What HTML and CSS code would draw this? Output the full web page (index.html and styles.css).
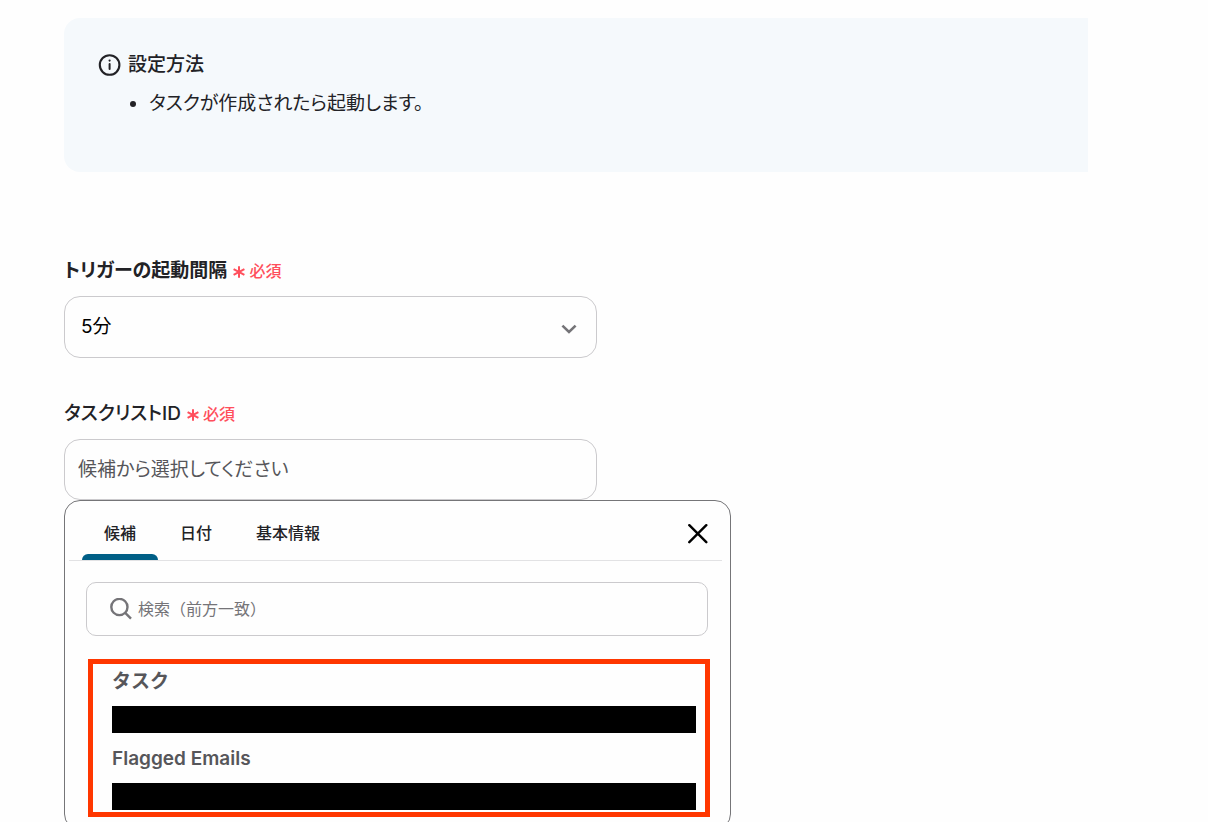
FILE: index.html
```html
<!DOCTYPE html>
<html lang="ja">
<head>
<meta charset="utf-8">
<meta name="viewport" content="width=device-width, initial-scale=1">
<title>トリガー設定</title>
<link rel="stylesheet" href="styles.css">
</head>
<body>
<main class="page">
  <section class="guide">
    <h2 class="guide-title">
      <svg class="guide-icon" viewBox="0 0 22 22" fill="none" aria-hidden="true">
        <circle cx="11.6" cy="11" r="9.8" stroke="currentColor" stroke-width="2.1"/>
        <path d="M11.6 10v5" stroke="currentColor" stroke-width="2" stroke-linecap="round"/>
        <circle cx="11.6" cy="6.6" r="1.1" fill="currentColor"/>
      </svg>
      設定方法
    </h2>
    <ul class="guide-list">
      <li>タスクが作成されたら起動します。</li>
    </ul>
  </section>

  <form class="form">
    <div class="field">
      <div class="field-head">
        <label class="field-label field-label-strong" for="interval">トリガーの起動間隔</label>
        <span class="required">
          <svg class="required-mark" viewBox="0 0 12 12" aria-hidden="true"><path d="M6 .2v11.6M.6 3.1l10.8 5.8M11.4 3.1L.6 8.9"/></svg>
          必須
        </span>
      </div>
      <div class="select-wrap">
        <select class="control select" id="interval"><option>5分</option></select>
        <svg class="select-arrow" viewBox="0 0 16 10" aria-hidden="true"><path d="M1.4 1.6L8 8l6.6-6.4"/></svg>
      </div>
    </div>

    <div class="field">
      <div class="field-head">
        <label class="field-label" for="list-id">タスクリストID</label>
        <span class="required">
          <svg class="required-mark" viewBox="0 0 12 12" aria-hidden="true"><path d="M6 .2v11.6M.6 3.1l10.8 5.8M11.4 3.1L.6 8.9"/></svg>
          必須
        </span>
      </div>
      <input class="control" id="list-id" type="text" placeholder="候補から選択してください">

      <div class="popup">
        <div class="popup-head">
          <div class="tabs" role="tablist">
            <button class="tab tab-active" type="button" role="tab" aria-selected="true">候補</button>
            <button class="tab" type="button" role="tab" aria-selected="false">日付</button>
            <button class="tab" type="button" role="tab" aria-selected="false">基本情報</button>
          </div>
          <button class="close" type="button" aria-label="閉じる">
            <svg class="close-icon" viewBox="0 0 20 20" aria-hidden="true"><path d="M1.3 1.2l17 17M18.3 1.2l-17 17"/></svg>
          </button>
        </div>
        <div class="search">
          <svg class="search-icon" viewBox="0 0 22 22" aria-hidden="true"><circle cx="9.4" cy="9" r="8.1"/><path d="M15.2 14.8l5.8 5.8"/></svg>
          <input class="search-input" type="text" aria-label="検索" placeholder="検索（前方一致）">
        </div>
        <ul class="options">
          <li class="option"><span class="option-name">タスク</span><span class="option-value"></span></li>
          <li class="option"><span class="option-name">Flagged Emails</span><span class="option-value"></span></li>
        </ul>
      </div>
    </div>
  </form>
</main>
</body>
</html>
```

FILE: styles.css
```css
* {
  box-sizing: border-box;
}

body {
  margin: 0;
  background: #fefefe;
  color: #222226;
  font-family: Inter, "Noto Sans CJK JP", sans-serif;
  font-size: 19px;
  line-height: 28px;
  font-feature-settings: "palt";
}

button,
input,
select {
  font: inherit;
  font-feature-settings: inherit;
  color: inherit;
}

.page {
  padding: 18px 120px 0 64px;
}

.guide {
  min-height: 154px;
  padding: 33px 34px;
  border-radius: 16px 0 0 16px;
  background: #f5f9fc;
}

.guide-title {
  display: flex;
  align-items: center;
  gap: 8px;
  margin: 0;
  font-size: 19px;
  font-weight: 500;
}

.guide-icon {
  width: 22px;
  height: 22px;
  overflow: visible;
}

.guide-list {
  margin: 11px 0 0;
  padding-left: 51px;
}

.form {
  display: flex;
  flex-direction: column;
  gap: 42px;
  margin-top: 85px;
}

.field-head {
  display: flex;
  align-items: center;
  gap: 6px;
  margin-bottom: 11px;
}

.field-label {
  font-weight: 500;
}

.field-label-strong {
  font-weight: 600;
}

.required {
  display: flex;
  align-items: center;
  gap: 4px;
  color: #ff4f5c;
  font-size: 16px;
  font-weight: 500;
}

.required-mark {
  width: 12px;
  height: 12px;
  margin-top: 2px;
  fill: none;
  stroke: currentColor;
  stroke-width: 2;
}

.select-wrap {
  position: relative;
  max-width: 533px;
}

.control {
  display: block;
  width: 100%;
  max-width: 533px;
  height: 61px;
  padding: 0 13px;
  border: 1px solid #cbcacd;
  border-radius: 16px;
  background: #fefefe;
}

.select {
  appearance: none;
  height: 62px;
  padding: 0 48px 0 16px;
  color: #000;
}

.select-arrow {
  position: absolute;
  top: 28px;
  right: 20px;
  width: 16px;
  height: 10px;
  fill: none;
  stroke: #757478;
  stroke-width: 2.6;
  pointer-events: none;
}

.control::placeholder {
  color: #56565a;
  opacity: 1;
}

.popup {
  max-width: 667px;
  padding: 0 8px 12px 4px;
  border: 1px solid #757578;
  border-radius: 16px;
  background: #fefefe;
}

.popup-head {
  display: flex;
  align-items: stretch;
  justify-content: space-between;
  height: 60px;
  padding: 0 14px 0 13px;
  border-bottom: 1px solid #e2e2e4;
}

.tabs {
  display: flex;
}

.tab {
  position: relative;
  padding: 5px 22px 0;
  border: 0;
  background: none;
  font-size: 16px;
  font-weight: 500;
}

.tab-active::after {
  content: "";
  position: absolute;
  right: 0;
  bottom: 0;
  left: 0;
  height: 6px;
  border-radius: 6px 6px 0 0;
  background: #005f86;
}

.close {
  display: flex;
  align-items: center;
  padding: 6px 0 0;
  border: 0;
  background: none;
  color: #000;
}

.close-icon {
  width: 20px;
  height: 20px;
  fill: none;
  stroke: currentColor;
  stroke-width: 2.4;
  stroke-linecap: round;
}

.search {
  display: flex;
  align-items: center;
  gap: 6px;
  height: 54px;
  margin: 21px 14px 0 17px;
  padding: 0 23px;
  border: 1px solid #cbcacd;
  border-radius: 10px;
}

.search-icon {
  width: 22px;
  height: 22px;
  fill: none;
  stroke: #757478;
  stroke-width: 2.4;
}

.search-input {
  flex: 1;
  min-width: 0;
  padding: 0;
  border: 0;
  background: none;
  font-size: 16px;
  font-feature-settings: normal;
}

.search-input::placeholder {
  color: #757478;
  opacity: 1;
}

.options {
  display: flex;
  flex-direction: column;
  gap: 12px;
  margin: 23px 12px 0 19px;
  padding: 4px 9px 2px 19px;
  border: 5px solid #ff3700;
  list-style: none;
}

.option {
  display: flex;
  flex-direction: column;
  gap: 10px;
}

.option-name {
  line-height: 28px;
  color: #56565a;
  font-feature-settings: normal;
  font-weight: 600;
}

.option-value {
  height: 27px;
  background: #000;
}
```
